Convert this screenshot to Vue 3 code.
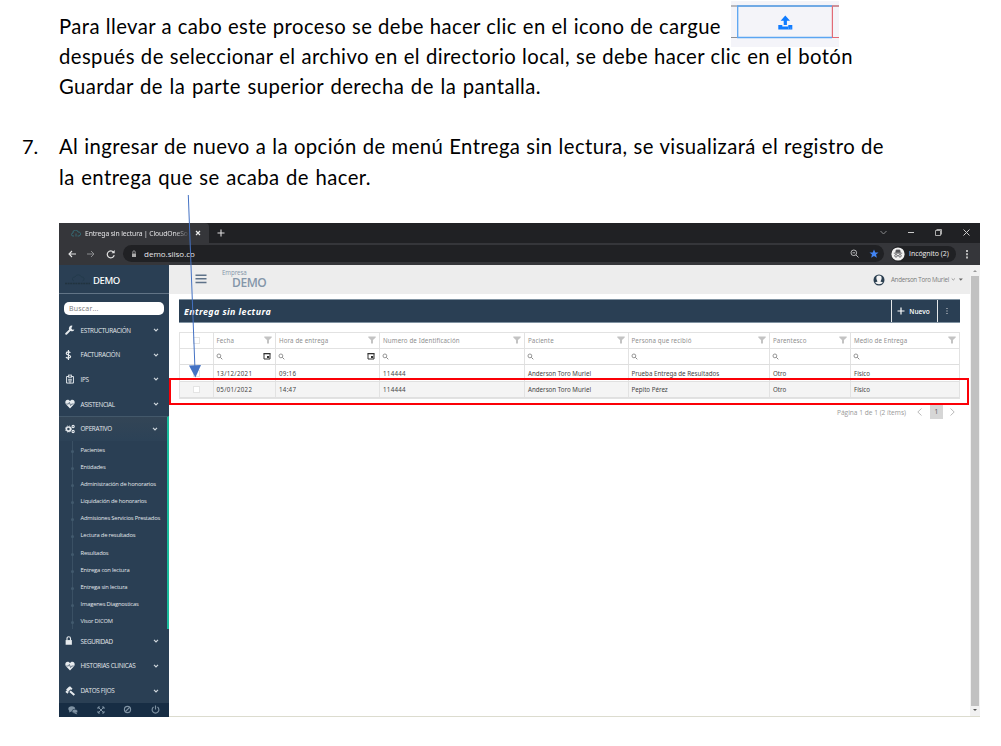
<template>
  <div class="page">
    <div class="intro">
      <p class="line">
        <span class="t l1">Para llevar a cabo este proceso se debe hacer clic en el icono de cargue</span>
        <span class="upload">
          <svg viewBox="0 0 108 46" width="108" height="46">
            <path d="M0 5H108" stroke="#a5a5a9" stroke-width="1.4" />
            <path d="M0 36.5H6M101 36.5H108" stroke="#8f8f93" stroke-width="1" />
            <path d="M101 5H108M101.4 4.700V36.500H108" fill="none" stroke="#e26b76" stroke-width="1.2" />
            <path d="M101 5H6.700V36.500H101" fill="none" stroke="#5aa5f2" stroke-width="1.3" />
            <path d="M54.3 14.500L59 19.800H55.9V24.1H52.7V19.800H49.6Z" fill="#0f7bff" />
            <path d="M47.3 23.900H51.3V25.500H57.3V23.900H61.3V28.500H47.3Z" fill="#0f7bff" />
            <path d="M57 27.100H58M59.3 27.100H60.3" stroke="#8cc1ff" stroke-width=".8" />
          </svg>
        </span>
      </p>
      <p class="line"><span class="t l2">después de seleccionar el archivo en el directorio local, se debe hacer clic en el botón</span></p>
      <p class="line"><span class="t l3">Guardar de la parte superior derecha de la pantalla.</span></p>
    </div>

    <div class="step">
      <span class="num">7.</span>
      <div>
        <p class="line"><span class="t l4">Al ingresar de nuevo a la opción de menú Entrega sin lectura, se visualizará el registro de</span></p>
        <p class="line"><span class="t l5">la entrega que se acaba de hacer.</span></p>
      </div>
    </div>

    <div class="browser">
      <div class="tabs">
        <div class="tab">
          <svg class="cloud" viewBox="0 0 20 14" width="10" height="7"><path d="M6 12H4a3 3 0 010-6 5 5 0 0110-2 4 4 0 012 8h-3M10 7v6" fill="none" stroke="#36717a" stroke-width="1.8" /></svg>
          <span class="tab-title">Entrega sin lectura | CloudOneSo</span>
          <svg viewBox="0 0 6 6" width="6" height="6"><path d="M1 1l4 4M5 1L1 5" stroke="#eee" stroke-width="1.2" /></svg>
        </div>
        <svg class="plus" viewBox="0 0 8 8" width="8" height="8"><path d="M4 .5v7M.5 4h7" stroke="#ddd" stroke-width="1.1" /></svg>
        <svg class="win" viewBox="0 0 92 10" width="92" height="10">
          <path d="M1.500 3L4.500 6L7.500 3" fill="none" stroke="#88898b" />
          <path d="M29 4.500H35M84.500 1.500l6 6M90.500 1.500l-6 6" stroke="#ccc" />
          <path d="M56.500 2.500h5v5h-5zM57.500 1.500h5v5" fill="none" stroke="#bbb" stroke-width=".9" />
        </svg>
      </div>

      <div class="urlbar">
        <svg viewBox="0 0 50 10" width="50" height="10">
          <path d="M9 5H2M5 2L2 5l3 3" fill="none" stroke="#e4e4e4" stroke-width="1.1" />
          <path d="M20 5h7M24 2l3 3-3 3" fill="none" stroke="#8b8c8f" />
          <path d="M46.500 3.200A3.500 3.500 0 1047.200 6.200" fill="none" stroke="#e4e4e4" stroke-width="1.200" />
          <path d="M47.700 1v3.200h-3.200z" fill="#e4e4e4" />
        </svg>
        <div class="address">
          <svg viewBox="0 0 6 8" width="6" height="8"><path d="M1 3.500h4v3.500H1z" fill="#aaa" /><path d="M1.800 3.500V2a1.200 1.200 0 012.400 0v1.500" fill="none" stroke="#aaa" stroke-width=".8" /></svg>
          <span class="host">demo.siiso.co</span>
          <svg class="zoom" viewBox="0 0 9 9" width="9" height="9"><circle cx="3.800" cy="3.800" r="2.800" fill="none" stroke="#b5b6b8" /><path d="M6 6l2.500 2.500M2.500 3.800h2.600" stroke="#b5b6b8" /></svg>
          <svg class="star" viewBox="0 0 10 10" width="10" height="10"><path d="M5 .5l1.300 3h3.200L7 5.500l.9 3.300L5 7 2.100 8.800 3 5.500.5 3.500h3.200z" fill="#4285f4" /></svg>
        </div>
        <div class="incog">
          <svg viewBox="0 0 14 14" width="14" height="14">
            <circle cx="7" cy="7" r="6.600" fill="#f1f1f1" />
            <path d="M4.700 5.700L5.200 3h3.600l.5 2.700M2.800 6.200h8.400" fill="#55565a" stroke="#55565a" stroke-width=".8" />
            <circle cx="5" cy="8.800" r="1.300" fill="none" stroke="#55565a" stroke-width=".8" /><circle cx="9" cy="8.800" r="1.300" fill="none" stroke="#55565a" stroke-width=".8" /><path d="M6.300 8.600h1.400" stroke="#55565a" stroke-width=".7" />
          </svg>
          <span>Incógnito (2)</span>
        </div>
        <svg class="dots" viewBox="0 0 4 10" width="4" height="10"><path d="M1 1h2v2H1zM1 4.200h2v2H1zM1 7.400h2v2H1z" fill="#bbb" /></svg>
      </div>

      <div class="app">
        <aside class="sidebar">
          <div class="brand">
            <svg viewBox="0 0 28 14" width="28" height="14"><path d="M10 8a2 2 0 011-4 3.500 3.500 0 016.500 0 2 2 0 011 4" fill="none" stroke="#233a4b" stroke-width=".9" /><path d="M1 10.500H26" stroke="#21333f" stroke-width="1.500" stroke-dasharray="2 .6" /></svg>
            <span>DEMO</span>
          </div>
          <div class="search">Buscar...</div>
          <template v-for="item in menu" :key="item.label">
            <div class="item" :class="{ active: item.children }">
              <svg class="ico" viewBox="0 0 16 16" width="10" height="10" v-html="icons[item.icon]"></svg>
              <span class="label">{{ item.label }}</span>
              <svg class="chev" viewBox="0 0 6 4" width="6" height="4"><path d="M1 .8L3 2.800 5 .8" fill="none" stroke="#cfd6dc" stroke-width="1.200" /></svg>
            </div>
            <ul v-if="item.children" class="sub">
              <li v-for="c in item.children" :key="c">{{ c }}</li>
            </ul>
          </template>
          <div class="foot">
            <svg viewBox="0 0 16 16" width="10" height="10"><ellipse cx="6" cy="6" rx="5.500" ry="4" fill="#7f92a3" /><ellipse cx="11" cy="10" rx="4.500" ry="3.300" fill="#7f92a3" stroke="#172d44" /><path d="M2 8v4l4-2zM13 12l2 3-5-2z" fill="#7f92a3" /></svg>
            <svg viewBox="0 0 16 16" width="8" height="8"><path d="M2 2l12 12M14 2L2 14M2 6V2h4M10 2h4v4M14 10v4h-4M6 14H2v-4" fill="none" stroke="#7f92a3" stroke-width="2" /></svg>
            <svg viewBox="0 0 16 16" width="9" height="9"><circle cx="8" cy="8" r="5.500" fill="none" stroke="#7f92a3" stroke-width="2" /><path d="M4 12l8-8" stroke="#7f92a3" stroke-width="2" /></svg>
            <svg viewBox="0 0 16 16" width="9" height="9"><path d="M4.500 3.500a6 6 0 107 0M8 1v7" fill="none" stroke="#7f92a3" stroke-width="2" /></svg>
          </div>
        </aside>

        <main class="main">
          <header class="top">
            <svg class="burger" viewBox="0 0 12 10" width="12" height="10"><path d="M.5 1.200h11M.5 4.800h11M.5 8.400h11" stroke="#5e7289" stroke-width="1.500" /></svg>
            <div class="company"><small>Empresa</small><b>DEMO</b></div>
            <div class="user">
              <svg viewBox="0 0 12 12" width="12" height="12"><circle cx="6" cy="6" r="5.500" fill="#2b3f50" /><path d="M6 1.500c2 0 2.900 1.300 2.600 3C8.400 6 7.700 6.800 7.500 7.400L9.900 8.500C8.500 10.700 3.500 10.700 2.100 8.500l2.400-1.100C4.300 6.800 3.600 6 3.400 4.500c-.3-1.700.6-3 2.600-3z" fill="#f4f4f4" /></svg>
              <span>Anderson Toro Muriel</span>
              <svg viewBox="0 0 12 5" width="12" height="5"><path d="M.7 1.500l1.600 1.500 1.600-1.500" fill="none" stroke="#777" stroke-width=".7" /><path d="M7.800 1.500h4L9.800 3.800z" fill="#666" /></svg>
            </div>
          </header>

          <div class="titlebar">
            <h1>Entrega sin lectura</h1>
            <button class="nuevo"><svg viewBox="0 0 8 8" width="8" height="8"><path d="M4 .5v7M.5 4h7" stroke="#fff" stroke-width="1.200" /></svg>Nuevo</button>
            <button class="more"><svg viewBox="0 0 2 8" width="2" height="8"><path d="M.5 1h1v1h-1zM.5 3.500h1v1h-1zM.5 6h1v1h-1z" fill="#ddd" /></svg></button>
          </div>

          <div class="grid">
            <div class="row head">
              <div class="cell chk"><i class="box"></i></div>
              <div v-for="c in columns" :key="c.name" class="cell">
                <span>{{ c.name }}</span>
                <svg viewBox="0 0 8 8" width="8" height="8"><path d="M.3.5h7.400v1L5 4v3.600H3V4L.3 1.500z" fill="#c3c3c3" /></svg>
              </div>
            </div>
            <div class="row filter">
              <div class="cell chk"></div>
              <div v-for="c in columns" :key="c.name" class="cell">
                <svg viewBox="0 0 7 7" width="7" height="7"><circle cx="2.900" cy="2.900" r="1.900" fill="none" stroke="#8a8a8a" stroke-width=".9" /><path d="M4.300 4.300l2 2" stroke="#8a8a8a" /></svg>
                <svg v-if="c.date" class="cal" viewBox="0 0 8 8" width="8" height="8"><path d="M1 1.500h6v5.500H1z" fill="none" stroke="#333" /><path d="M.5 1.700h7" stroke="#333" stroke-width="1.200" /><path d="M4 4h2.200v2H4z" fill="#333" /></svg>
              </div>
            </div>
            <div v-for="(r, i) in rows" :key="i" class="row data" :class="{ alt: i === 1 }">
              <div class="cell chk"><i class="box"></i></div>
              <div v-for="(v, j) in r" :key="j" class="cell" :class="{ digits: j < 3 }"><span>{{ v }}</span></div>
            </div>
          </div>

          <div class="pager">
            <span>Página 1 de 1 (2 ítems)</span>
            <svg viewBox="0 0 5 8" width="5" height="8"><path d="M4.500.5L.8 4l3.700 3.500" fill="none" stroke="#aaa" stroke-width=".8" /></svg>
            <b>1</b>
            <svg viewBox="0 0 5 8" width="5" height="8"><path d="M.5.5L4.200 4 .5 7.500" fill="none" stroke="#aaa" stroke-width=".8" /></svg>
          </div>
        </main>

        <div class="scroll">
          <svg viewBox="0 0 6 4" width="6" height="4"><path d="M1 3l2-2 2 2z" fill="#999" /></svg>
          <div class="thumb"></div>
          <svg viewBox="0 0 6 4" width="6" height="4"><path d="M1 1l2 2 2-2z" fill="#555" /></svg>
        </div>
      </div>

      <div class="highlight"></div>
    </div>

    <svg class="arrow" viewBox="0 0 20 190" width="20" height="190">
      <path d="M5.300 0L12 175" stroke="#4472c4" stroke-width="1" />
      <path d="M6 170.500L18 170L12.400 182.500z" fill="#4472c4" />
    </svg>
  </div>
</template>

<script setup>
const menu = [
  { label: 'ESTRUCTURACIÓN', icon: 'wrench' },
  { label: 'FACTURACIÓN', icon: 'dollar' },
  { label: 'IPS', icon: 'hospital' },
  { label: 'ASISTENCIAL', icon: 'heart' },
  {
    label: 'OPERATIVO',
    icon: 'cogs',
    children: [
      'Pacientes',
      'Entidades',
      'Administración de honorarios',
      'Liquidación de honorarios',
      'Admisiones Servicios Prestados',
      'Lectura de resultados',
      'Resultados',
      'Entrega con lectura',
      'Entrega sin lectura',
      'Imagenes Diagnosticas',
      'Visor DICOM'
    ]
  },
  { label: 'SEGURIDAD', icon: 'lock' },
  { label: 'HISTORIAS CLINICAS', icon: 'heart' },
  { label: 'DATOS FIJOS', icon: 'gavel' }
]

const icons = {
  wrench: '<path d="M2 14L9 7" stroke="#e7ebee" stroke-width="3.200" stroke-linecap="round"/><path d="M12 1a4.500 4.500 0 103 6l-3 .5-2-2z" fill="#e7ebee"/>',
  dollar: '<path d="M10.500 4.500C9 2.500 4 2.500 4 5.500s7 2 7 5-5.500 3-7.500.8M7.500 0v16" transform="translate(-2)" fill="none" stroke="#e7ebee" stroke-width="1.900"/>',
  hospital: '<path d="M2.500 4h11v10.500h-11z" fill="none" stroke="#dce2e7" stroke-width="1.600"/><path d="M5 1h6v5H5z" fill="#dce2e7"/><path d="M5 8.500h6M5 11h6M8 11v4" stroke="#dce2e7" stroke-width="1.500"/><path d="M8 2v3M6.500 3.500h3" stroke="#2a3f54"/>',
  heart: '<path d="M8 15L1.500 8.500C-1 4.500 1.500 0 5.500 1.200L8 3l2.500-1.800C14.500 0 17 4.500 14.500 8.500z" fill="#e7ebee"/><path d="M2 8h3.500l1.500-2.500L9 10.500 10.500 8H14" fill="none" stroke="#2a3f54" stroke-width="1"/>',
  cogs: '<circle cx="5.500" cy="8" r="3.300" fill="none" stroke="#e7ebee" stroke-width="2.600"/><circle cx="5.500" cy="8" r="5" fill="none" stroke="#e7ebee" stroke-width="1.200" stroke-dasharray="2 2"/><circle cx="13" cy="4" r="1.800" fill="none" stroke="#e7ebee" stroke-width="1.700"/><circle cx="13" cy="12" r="1.800" fill="none" stroke="#e7ebee" stroke-width="1.700"/>',
  lock: '<path d="M1 6.500h10V14H1z" fill="#e7ebee"/><path d="M3.200 7V4a2.800 2.800 0 015.600 0v3" fill="none" stroke="#e7ebee" stroke-width="1.800"/>',
  gavel: '<path d="M3 7l5-5M8 8.500L15 14.500" stroke="#e7ebee" stroke-width="3.400"/><path d="M1.500 8.500L5 11M7 1.500L11 5.500M4 8l4-4" stroke="#e7ebee" stroke-width="3"/>'
}

const columns = [
  { name: 'Fecha', date: true },
  { name: 'Hora de entrega', date: true },
  { name: 'Numero de Identificación' },
  { name: 'Paciente' },
  { name: 'Persona que recibió' },
  { name: 'Parentesco' },
  { name: 'Medio de Entrega' }
]

const rows = [
  ['13/12/2021', '09:16', '114444', 'Anderson Toro Muriel', 'Prueba Entrega de Resultados', 'Otro', 'Físico'],
  ['05/01/2022', '14:47', '114444', 'Anderson Toro Muriel', 'Pepito Pérez', 'Otro', 'Físico']
]
</script>

<style>
body {
  background: #fff;
}
</style>

<style scoped>
* {
  box-sizing: border-box;
}

svg {
  display: block;
  flex: none;
}

.page {
  position: relative;
  width: 1001px;
  height: 746px;
  padding: 12px 0 0 59px;
  overflow: hidden;
  font-family: Lato, "Liberation Sans", sans-serif;
  color: #000;
}

.line {
  display: flex;
  height: 30px;
  margin: 0;
  font-size: 20.3px;
  line-height: 28px;
  letter-spacing: 0.42px;
  white-space: nowrap;
}

.t {
  text-align-last: justify;
}

.l1 { width: 662px; }
.l2 { width: 794px; }
.l3 { width: 482px; }
.l4 { width: 825px; }
.l5 { width: 312px; }

.upload {
  height: 46px;
  margin: -11px 0 0 10px;
  background: #f4f4f9;
}

.intro .line + .line {
  position: relative;
}

.step {
  display: flex;
  margin: 30px 0 0 -37px;
}

.step .line + .line {
  margin-top: 1px;
}

.num {
  width: 37px;
  font-size: 20px;
  line-height: 28px;
}

.browser {
  position: relative;
  width: 921px;
  height: 494px;
  margin-top: 30px;
  font-family: "Open Sans", "Noto Sans", sans-serif;
}

.tabs {
  display: flex;
  align-items: center;
  height: 20px;
  background: #202124;
}

.tab {
  display: flex;
  align-items: center;
  width: 150px;
  height: 20px;
  padding-left: 12px;
  background: #35363a;
  border-radius: 0 4px 0 0;
}

.tab-title {
  width: 105px;
  margin: 0 5px 0 4px;
  overflow: hidden;
  color: #e3e3e5;
  font-family: "Noto Sans", sans-serif;
  font-size: 6.8px;
  letter-spacing: -0.12px;
  white-space: nowrap;
  mask-image: linear-gradient(90deg, #000 85%, transparent);
}

.plus {
  margin-left: 8px;
}

.win {
  margin-left: 654px;
}

.urlbar {
  display: flex;
  align-items: center;
  height: 22px;
  padding: 0 0 1px 8px;
  background: #35363a;
}

.address {
  display: flex;
  align-items: center;
  width: 761px;
  height: 17px;
  margin-left: 6px;
  padding-left: 8px;
  background: #202124;
  border-radius: 9px;
}

.host {
  flex: 1;
  margin-left: 7px;
  color: #e6e6e8;
  font-size: 8px;
}

.star {
  margin: 0 5px 0 10px;
}

.incog {
  display: flex;
  align-items: center;
  width: 65px;
  height: 16px;
  margin-left: 7px;
  background: #202124;
  border-radius: 8px;
  color: #eee;
  font-size: 7px;
  letter-spacing: -0.05px;
  white-space: nowrap;
}

.incog span {
  margin-left: 4px;
}

.dots {
  margin-left: 9px;
}

.app {
  display: flex;
  height: 452px;
  border-bottom: 1px solid #dcdccf;
}

.sidebar {
  display: flex;
  flex-direction: column;
  width: 110px;
  height: 452px;
  background: #2a3f54;
  color: #e2e7eb;
}

.brand {
  display: flex;
  align-items: center;
  height: 29px;
  padding: 2px 0 0 5px;
  border-bottom: 1px solid #627486;
  color: #fff;
  font-family: "Noto Sans", sans-serif;
  font-size: 9.5px;
  font-weight: 500;
  letter-spacing: -0.4px;
}

.brand span {
  margin-left: 1px;
}

.search {
  height: 13px;
  margin: 8px 5px 3px;
  padding-left: 5px;
  background: #fff;
  border-radius: 5px;
  color: #777;
  font-size: 7px;
  letter-spacing: 0.2px;
  line-height: 13px;
}

.item {
  display: flex;
  align-items: center;
  height: 24.6px;
  padding: 0 10px 0 6px;
}

.item.active {
  background: linear-gradient(#334556, #2c4257);
  border-right: 2px solid #1abb9c;
  border-top: 1px solid #43586a;
  padding: 0 9px 1px 6px;
}

.label {
  flex: 1;
  margin-left: 5.5px;
  font-size: 6.3px;
  letter-spacing: -0.28px;
  white-space: nowrap;
}

.sub {
  height: 188.1px;
  margin: 0;
  padding: 1px 0 0 13px;
  border-right: 2px solid #1abb9c;
  list-style: none;
  background: linear-gradient(#3a5064, #3a5064) 13px 0 / 1px 100% no-repeat;
}

.sub li {
  position: relative;
  height: 17.1px;
  padding-left: 8.5px;
  font-size: 5.8px;
  letter-spacing: -0.18px;
  line-height: 17.1px;
  white-space: nowrap;
}

.sub li::before {
  content: "";
  position: absolute;
  top: 8px;
  left: -1.5px;
  width: 3px;
  height: 3px;
  background: #425a6e;
  border-radius: 50%;
}

.foot {
  display: flex;
  align-items: center;
  justify-content: space-around;
  flex: 1;
  background: #172d44;
}

.main {
  width: 801px;
  background: #fff;
}

.top {
  display: flex;
  height: 29px;
  background: #ededed;
  color: #5b6b7c;
}

.burger {
  margin: 9px 0 0 26px;
}

.company {
  display: flex;
  flex-direction: column;
  margin-left: 15px;
  padding-top: 3px;
  color: #8496a9;
}

.company small {
  font-size: 6.2px;
  line-height: 9px;
  letter-spacing: -0.1px;
}

.company b {
  margin: -1px 0 0 10px;
  font-size: 12px;
  font-weight: 600;
  line-height: 13px;
  letter-spacing: -0.4px;
}

.user {
  display: flex;
  align-items: center;
  margin-left: auto;
  padding-right: 7px;
  color: #7b7b7b;
  font-size: 6.2px;
  letter-spacing: -0.25px;
}

.user span {
  margin: 0 2px 0 6px;
}

.titlebar {
  display: flex;
  width: 781px;
  height: 24px;
  margin: 5px 0 9px 10px;
  background: #2a3f54;
  border-top: 1px solid #8193a2;
  border-bottom: 1px solid #8193a2;
}

h1 {
  flex: 1;
  margin: 0 0 0 5px;
  color: #fff;
  font-family: "Noto Sans", sans-serif;
  font-size: 8.9px;
  font-style: italic;
  font-weight: 700;
  letter-spacing: 0.4px;
  line-height: 23px;
}

button {
  display: flex;
  align-items: center;
  justify-content: center;
  height: 22px;
  padding: 0;
  background: none;
  border: 0;
  border-left: 1px solid #e5e8ea;
  color: #fff;
  font-family: inherit;
  font-size: 6.5px;
  font-weight: 600;
}

.nuevo {
  gap: 4px;
  width: 46px;
  padding-right: 2px;
}

.more {
  width: 23px;
  padding-right: 4px;
}

.grid {
  width: 781px;
  margin-left: 10px;
  border: 1px solid #e2e2e2;
  color: #444;
  font-family: "Noto Sans", sans-serif;
  font-size: 6.2px;
}

.row {
  display: grid;
  grid-template-columns: 33.5px 62.5px 104px 145px 103.5px 141.5px 81px 1fr;
  height: 16px;
}

.cell {
  display: flex;
  align-items: center;
  justify-content: space-between;
  padding: 0 3px;
  border-right: 1px solid #e2e2e2;
  white-space: nowrap;
}

.cell:last-child {
  border-right: 0;
}

.head {
  color: #8f8f8f;
  letter-spacing: 0.12px;
  border-bottom: 1px solid #e2e2e2;
}

.head .cell {
  padding-bottom: 1px;
}

.filter {
  border-bottom: 1px solid #dedede;
}

.filter .cell {
  padding: 0 3px 1px 2px;
}

.cal {
  margin-right: 1px;
}

.data {
  height: 17px;
  border-bottom: 1px solid #e0e0e0;
}

.digits {
  letter-spacing: 0.28px;
}

.alt {
  height: 16px;
  background: #f4f4f4;
}

.grid .chk {
  justify-content: center;
}

.box {
  width: 7px;
  height: 7px;
  background: #fff;
  border: 1px solid #e4e4e4;
}

.pager {
  display: flex;
  align-items: center;
  justify-content: flex-end;
  height: 14px;
  margin-top: 6px;
  padding-right: 15px;
  color: #999;
  font-size: 6.6px;
}

.pager b {
  width: 13px;
  height: 14px;
  margin: 0 7px 0 8px;
  background: #d6d6d6;
  color: #555;
  font-weight: 400;
  line-height: 14px;
  text-align: center;
}

.pager span {
  margin-right: 11px;
}

.scroll {
  display: flex;
  flex-direction: column;
  align-items: center;
  justify-content: space-between;
  width: 10px;
  padding: 4px 0;
  background: #f1f1f1;
}

.thumb {
  width: 8px;
  height: 430px;
  background: #c1c1c1;
}

.highlight {
  position: absolute;
  top: 155px;
  left: 110px;
  width: 800px;
  height: 27px;
  border: 2px solid #fb0007;
}

.arrow {
  position: absolute;
  top: 195px;
  left: 183px;
}
</style>
